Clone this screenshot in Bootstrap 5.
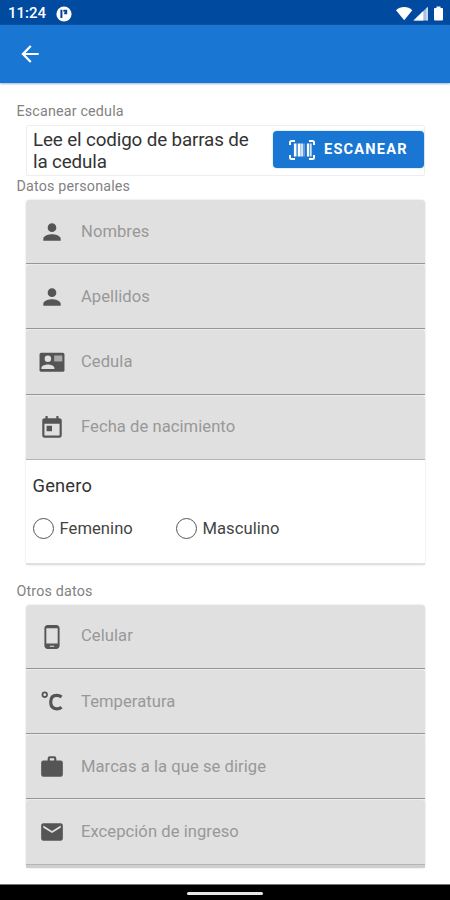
<!DOCTYPE html>
<html lang="es">
<head>
<meta charset="utf-8">
<meta name="viewport" content="width=device-width, initial-scale=1">
<title>Escanear cedula</title>
<link href="https://cdn.jsdelivr.net/npm/bootstrap@5.3.0/dist/css/bootstrap.min.css" rel="stylesheet">
<style>
body{font-family:Roboto,"Noto Sans",sans-serif;color:#333;width:450px;height:900px;overflow:hidden}
svg{display:block;flex:none}
.status{height:25px;background:#004a9f;padding:2px 6px 0 8px;font-size:15px;letter-spacing:0;font-weight:500}
.appbar{height:58px;background:#1976d2;padding-left:17px;box-shadow:0 1px 2px #9db8d3}
.content{padding:2px 25px 0 26px}
.section{margin-left:-9.5px;font-size:14.3px;line-height:20px;color:#828282;letter-spacing:.17px}
.scan{height:51px;border:1px solid #eee;border-radius:2px;padding:0 0 1px 6px}
.scan-text{font-size:18.8px;line-height:22px;letter-spacing:-.13px;color:#333;padding-top:1px}
.btn-scan{--bs-btn-bg:#1976d2;--bs-btn-color:#fff;--bs-btn-border-width:0;--bs-btn-border-radius:4px;--bs-btn-padding-y:0;width:151px;height:37px;margin-bottom:1px;padding:0 0 0 15px;font-size:14.6px;font-weight:700;letter-spacing:1.2px;box-shadow:0 0 2px #a9c4df}
.group{box-shadow:0 0 2px #d0d0d0;border-radius:4px}
.field{height:64.2px;background:#e0e0e0;border-bottom:1.3px solid #969696;border-radius:4px 4px 0 0;padding:1px 0 0 13px;gap:16px;font-size:16.6px;letter-spacing:.05px;color:#989898;margin-bottom:1px}
.field:last-child{margin-bottom:0;border-bottom-color:#b5b5b5}
.field svg{fill:#555}
.fields{background:#ebebeb;border-radius:4px 4px 0 0}
.gender{height:105px;padding:14px 0 0 6.5px;border-bottom:2px solid #e0e0e0}
.gender-title{font-size:18.3px;line-height:24px;letter-spacing:.2px}
.choice{gap:6px;font-size:16.6px;line-height:22px;letter-spacing:.05px;color:#444;width:143px}
.ring{width:21px;height:21px;border:1.7px solid #555;border-radius:50%}
.tail{height:3px;background:#cfcfcf}
.homebar{height:16px;background:#000;border-top:1px solid #777}
.pill{width:76px;height:3px;border-radius:2px;background:#e6e6e6;margin-top:2px}
</style>
<script src="https://cdn.jsdelivr.net/npm/bootstrap@5.3.0/dist/js/bootstrap.bundle.min.js"></script>
</head>
<body class="bg-white d-flex flex-column">
<header>
  <div class="status d-flex align-items-center text-white">
    <span>11:24</span>
    <svg class="ms-2 me-auto" width="20" height="18" viewBox="0 0 20 18"><circle cx="10" cy="9" r="7.6" fill="#fff"/><path d="M7.400 4.800v8.200M9.400 5.700h2.800v2.600h-2" fill="none" stroke="#00469b" stroke-width="2"/></svg>
    <svg width="48" height="18" viewBox="0 0 48 18" fill="#fff"><path d="M0 5.300C4.500 1 12 1 16.300 5.300L8.200 15.300z"/><path d="M17.500 15.500L31.500 2v13.500z" fill="#a9c1df"/><path d="M17.500 15.500L27.300 6v9.500z"/><path d="M30.700 3v12.500h1V2z"/><path d="M40.500 1.500h4V3H46q1 0 1 1v10.500q0 1-1 1h-7q-1 0-1-1V4q0-1 1-1h1.500z"/></svg>
  </div>
  <nav class="appbar d-flex align-items-center">
    <svg width="26" height="26" viewBox="0 0 24 24" fill="#fff"><path d="M20 11H7.830l5.590-5.590L12 4l-8 8 8 8 1.410-1.410L7.830 13H20v-2z"/></svg>
  </nav>
</header>
<main class="content flex-grow-1">
  <div class="section pt-3">Escanear cedula</div>
  <div class="scan d-flex align-items-center justify-content-between mt-1">
    <div class="scan-text">Lee el codigo de barras de<br>la cedula</div>
    <button class="btn btn-scan d-flex align-items-center" type="button">
      <svg class="me-2" width="28" height="22" viewBox="0 0 28 22" fill="none" stroke="#fff"><path stroke-width="2" d="M2 6V3.500Q2 2 3.500 2H7M21 2h3.500Q26 2 26 3.500V6M2 16v2.500Q2 20 3.500 20H7M21 20h3.500Q26 20 26 18.500V16"/><path stroke-width="2.200" d="M7 4.500v13M11 4.500v13M20 4.500v13"/><path stroke="#d2e2f4" stroke-width="2" d="M14 4.500v13M22.700 4.500v13"/><path stroke="#a9c8eb" stroke-width="1" d="M8.800 4.500v13M12.500 4.500v13M16 4.500v13"/></svg>
      ESCANEAR
    </button>
  </div>
  <div class="section">Datos personales</div>
  <section class="group mt-1">
    <div class="fields">
      <div class="field d-flex align-items-center"><svg width="26" height="26" viewBox="0 0 24 24"><path d="M12 12c2.210 0 4-1.790 4-4s-1.790-4-4-4-4 1.790-4 4 1.790 4 4 4zm0 2c-2.670 0-8 1.340-8 4v2h16v-2c0-2.660-5.330-4-8-4z"/></svg><span>Nombres</span></div>
      <div class="field d-flex align-items-center"><svg width="26" height="26" viewBox="0 0 24 24"><path d="M12 12c2.210 0 4-1.790 4-4s-1.790-4-4-4-4 1.790-4 4 1.790 4 4 4zm0 2c-2.670 0-8 1.340-8 4v2h16v-2c0-2.660-5.330-4-8-4z"/></svg><span>Apellidos</span></div>
      <div class="field d-flex align-items-center"><svg width="26" height="26" viewBox="0 0 24 24"><rect x=".5" y="3.500" width="23" height="17.500" rx="1.500"/><circle cx="8.200" cy="9" r="3" fill="#e0e0e0"/><path fill="#e0e0e0" d="M2.200 18.500v-1c0-2 4-3.100 6-3.100s6 1.100 6 3.100v1z"/><path fill="#aaa" d="M14 6h7.500v5.500H14z"/></svg><span>Cedula</span></div>
      <div class="field d-flex align-items-center"><svg width="26" height="26" viewBox="0 0 24 24"><path d="M19 3h-1V1h-2v2H8V1H6v2H5c-1.110 0-1.990.9-1.990 2L3 19c0 1.100.89 2 2 2h14c1.100 0 2-.9 2-2V5c0-1.100-.9-2-2-2zm0 16H5V8h14v11zM7 10h5v5H7z"/></svg><span>Fecha de nacimiento</span></div>
    </div>
    <div class="gender">
      <div class="gender-title">Genero</div>
      <div class="d-flex mt-3 pt-1">
        <label class="choice d-flex align-items-center"><span class="ring"></span>Femenino</label>
        <label class="choice d-flex align-items-center"><span class="ring"></span>Masculino</label>
      </div>
    </div>
  </section>
  <div class="section pt-3">Otros datos</div>
  <section class="group mt-1">
    <div class="fields">
      <div class="field d-flex align-items-center"><svg width="26" height="26" viewBox="0 0 24 24"><path d="M16 1H8C6.340 1 5 2.340 5 4v16c0 1.660 1.340 3 3 3h8c1.660 0 3-1.340 3-3V4c0-1.660-1.340-3-3-3zm-2 20h-4v-1h4v1zm3.250-3H6.750V4h10.500v14z"/></svg><span>Celular</span></div>
      <div class="field d-flex align-items-center"><svg width="26" height="26" viewBox="0 0 24 24"><g fill="none" stroke="#555"><circle cx="5.300" cy="5.300" r="2.100" stroke-width="1.600"/><path stroke-width="2.900" d="M20.800 7.400C19.500 6.300 18 5.900 16.300 5.900C12.500 5.900 10.800 8.600 10.800 12.100S12.500 18.300 16.300 18.300C18 18.300 19.500 17.900 20.800 16.800"/></g></svg><span>Temperatura</span></div>
      <div class="field d-flex align-items-center"><svg width="26" height="26" viewBox="0 0 24 24"><path d="M10 2h4q2 0 2 2v2h4q2 0 2 2v11q0 2-2 2H4q-2 0-2-2V8q0-2 2-2h4V4q0-2 2-2zm0 2v2h4V4z"/></svg><span>Marcas a la que se dirige</span></div>
      <div class="field d-flex align-items-center"><svg width="26" height="26" viewBox="0 0 24 24"><path d="M20 4H4c-1.100 0-1.990.9-1.990 2L2 18c0 1.100.9 2 2 2h16c1.100 0 2-.9 2-2V6c0-1.100-.9-2-2-2zm0 4l-8 5-8-5V6l8 5 8-5v2z"/></svg><span>Excepción de ingreso</span></div>
    </div>
    <div class="tail"></div>
  </section>
</main>
<footer class="homebar d-flex align-items-center justify-content-center"><div class="pill"></div></footer>
</body>
</html>
